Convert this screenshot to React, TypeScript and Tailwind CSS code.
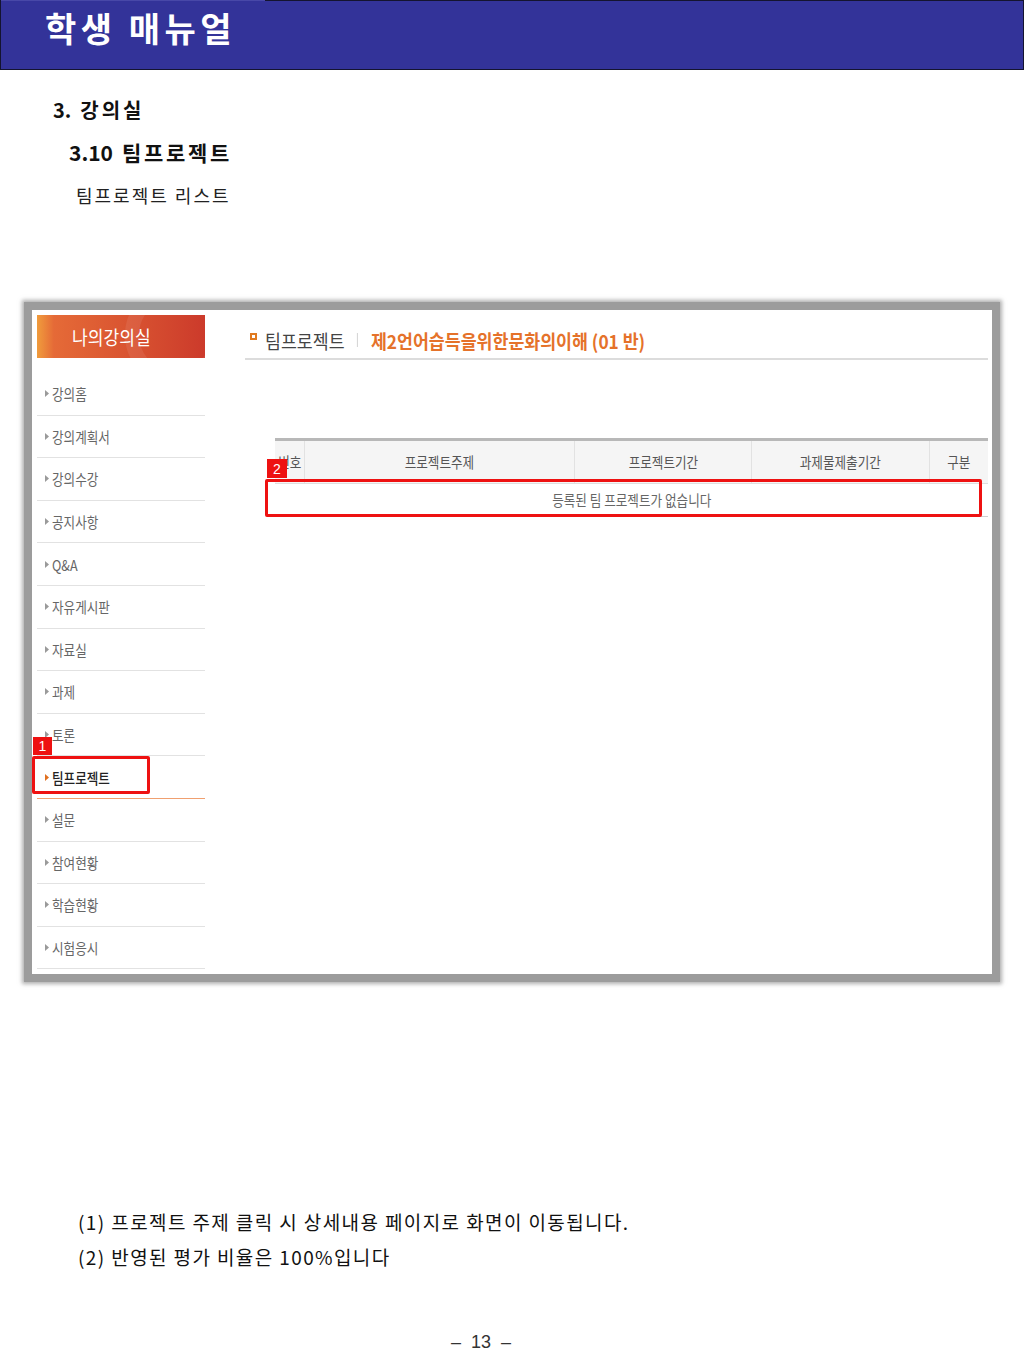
import React from "react";

const menu = [
  "강의홈",
  "강의계획서",
  "강의수강",
  "공지사항",
  "Q&A",
  "자유게시판",
  "자료실",
  "과제",
  "토론",
  "팀프로젝트",
  "설문",
  "참여현황",
  "학습현황",
  "시험응시",
];

const doc = { fontFamily: '"Noto Sans CJK KR", "Noto Sans", sans-serif' };

function Arrow({ active }: { active: boolean }) {
  return (
    <svg width="4" height="7" viewBox="0 0 4 7" className="shrink-0">
      <path d="M0 0 L4 3.5 L0 7 Z" fill={active ? "#e07020" : "#9a9a9a"} />
    </svg>
  );
}

function Badge({ n, className }: { n: string; className: string }) {
  return (
    <div
      className={`absolute bg-[#ee1111] text-white text-[14px] leading-none flex items-center justify-center ${className}`}
      style={{ fontFamily: '"Liberation Sans", Arial, sans-serif' }}
    >
      {n}
    </div>
  );
}

export default function App() {
  return (
    <div className="w-[1024px] h-[1365px] bg-white text-[#111] overflow-hidden" style={doc}>
      {/* banner */}
      <div className="h-[70px] bg-[#333399] border-l border-r border-b border-[#141430] flex flex-col">
        <div className="flex h-[1px] shrink-0">
          <div className="w-[264px] bg-[#4848a8]" />
          <div className="flex-1 bg-[#141430]" />
        </div>
        <div className="pl-[44px] pt-[6px] text-white text-[34px] font-bold leading-[42px] tracking-[4.5px]">
          학생 매뉴얼
        </div>
      </div>

      {/* headings */}
      <div className="mt-[26px] pl-[53px] text-[20px] font-bold leading-[28px] flex">
        <span>3.</span>
        <span className="ml-[9px] tracking-[3px]">강의실</span>
      </div>
      <div className="mt-[14px] pl-[69px] text-[21px] font-bold leading-[28px] flex">
        <span>3.10</span>
        <span className="ml-[9px] tracking-[2.7px]">팀프로젝트</span>
      </div>
      <div className="mt-[16px] pl-[76px] text-[18px] leading-[26px] text-[#222] tracking-[2px]">팀프로젝트 리스트</div>

      {/* screenshot frame */}
      <div className="relative mt-[94px] ml-[24px] w-[976px] h-[680px] border-[8px] border-[#9c9c9c] shadow-[0_0_4px_2px_rgba(120,120,120,0.6)] bg-white">
        <div className="flex pt-[5px] pl-[5px]">
          {/* sidebar */}
          <div className="w-[168px] shrink-0">
            <div className="relative h-[43px] overflow-hidden bg-linear-to-r from-[#f09c3c] via-[#e56a37] via-10% to-[#cc3a2b] flex items-center pl-[35px]">
              <div className="absolute right-[-20px] top-[-30px] w-[100px] h-[100px] rounded-full border-[14px] border-[#ffffff14]" />
              <span className="relative text-white text-[19px] leading-none inline-block scale-x-[0.9] origin-left">
                나의강의실
              </span>
            </div>
            <div className="mt-[15px]">
              {menu.map((m) => {
                const active = m === "팀프로젝트";
                return (
                  <div
                    key={m}
                    className={`h-[42.6px] flex items-center pl-[8px] gap-[3px] border-b ${
                      active ? "border-[#f0a070]" : "border-[#e2e2e2]"
                    }`}
                  >
                    <Arrow active={active} />
                    <span
                      className={`text-[15px] leading-none inline-block scale-x-[0.84] origin-left ${
                        active ? "text-[#222] font-medium" : "text-[#666]"
                      }`}
                    >
                      {m}
                    </span>
                  </div>
                );
              })}
            </div>
          </div>

          {/* main */}
          <div className="ml-[40px] w-[743px]">
            <div className="h-[45px] pt-[7px] border-b-2 border-[#dcdcdc] flex items-center">
              <div className="ml-[5px] mb-[8px] w-[7px] h-[7px] border-2 border-[#e07a20] shrink-0" />
              <div className="ml-[8px] flex items-center whitespace-nowrap scale-x-[0.91] origin-left">
                <span className="text-[19px] text-[#444] leading-none">팀프로젝트</span>
                <span className="mx-[14px] w-px h-[14px] bg-[#cfcfcf]" />
                <span className="text-[19px] text-[#e5722a] font-semibold leading-none">
                  제2언어습득을위한문화의이해 (01 반)
                </span>
              </div>
            </div>

            <div className="mt-[78px] ml-[30px] w-[713px] border-t-[3px] border-[#b8b8b8]">
              <div className="h-[43px] bg-[#f5f5f5] border-b border-[#dedede] flex text-[#555] text-[15px]">
                {[
                  ["번호", "w-[30px]"],
                  ["프로젝트주제", "w-[270px]"],
                  ["프로젝트기간", "w-[177px]"],
                  ["과제물제출기간", "w-[178px]"],
                  ["구분", "flex-1"],
                ].map(([t, w], i) => (
                  <div
                    key={t}
                    className={`${w} flex items-center justify-center whitespace-nowrap ${
                      i < 4 ? "border-r border-[#e2e2e2]" : ""
                    }`}
                  >
                    <span className="inline-block scale-x-[0.84]">{t}</span>
                  </div>
                ))}
              </div>
              <div className="h-[33px] border-b border-[#cfcfcf] flex items-center justify-center text-[15px] text-[#666]">
                <span className="inline-block scale-x-[0.84] whitespace-nowrap">등록된 팀 프로젝트가 없습니다</span>
              </div>
            </div>
          </div>
        </div>

        {/* annotations */}
        <div className="absolute left-[233px] top-[169px] w-[717px] h-[38px] border-[3px] border-[#ee1111] rounded-[2px]" />
        <Badge n="2" className="left-[235px] top-[149px] w-[20px] h-[19px]" />
        <div className="absolute left-[0px] top-[446px] w-[118px] h-[38px] border-[3px] border-[#ee1111] rounded-[2px]" />
        <Badge n="1" className="left-[1px] top-[427px] w-[19px] h-[18px]" />
      </div>

      {/* notes */}
      <div className="mt-[222px] pl-[78px] text-[19px] leading-[35px] text-[#111] tracking-[1.4px]">
        <div>(1) 프로젝트 주제 클릭 시 상세내용 페이지로 화면이 이동됩니다.</div>
        <div>(2) 반영된 평가 비율은 100%입니다</div>
      </div>

      <div
        className="mt-[55px] text-center text-[18px] text-[#333] pr-[62px] whitespace-pre"
        style={{ fontFamily: '"Liberation Sans", Arial, sans-serif' }}
      >
        {"–  13  –"}
      </div>
    </div>
  );
}
